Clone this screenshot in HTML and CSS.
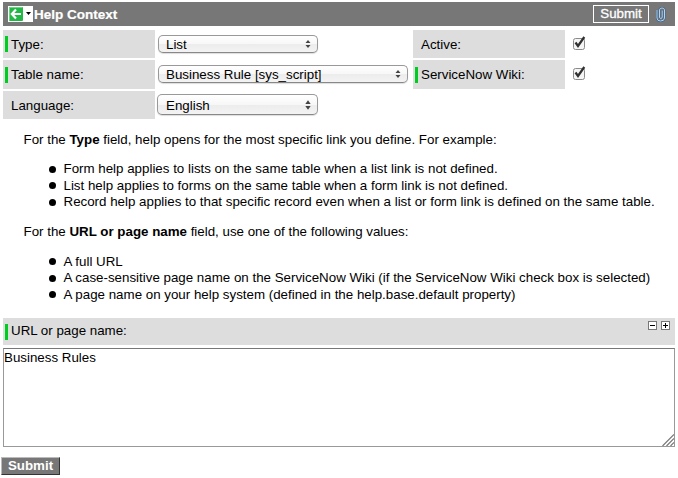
FILE: index.html
```html
<!DOCTYPE html>
<html lang="en">
<head>
<meta charset="utf-8">
<title>Help Context</title>
<link rel="stylesheet" href="styles.css">
</head>
<body>
<header class="titlebar">
  <div class="back">
    <svg width="25" height="16" viewBox="0 0 25 16">
      <rect width="25" height="16" fill="#fff"/>
      <rect x="1" y="1" width="14" height="14" rx="1" fill="#22b845"/>
      <path d="M1.500 14.500V1.500H14" fill="none" stroke="#68d981"/>
      <path d="M8 3.500L3.800 8L8 12.500M4 8H13" fill="none" stroke="#fff" stroke-width="2.200"/>
      <path d="M18 6H23L20.500 9Z" fill="#000"/>
    </svg>
  </div>
  <h1>Help Context</h1>
  <button class="top-submit">Submit</button>
  <svg class="clip" width="10" height="15" viewBox="0 0 10 15">
    <path d="M1 3V11Q1 14 4.500 14Q8.500 14 8.500 11V3Q8.500 1 6 1Q3.500 1 3.500 3V10Q3.500 11.500 4.800 11.500Q6.200 11.500 6.200 10V3.500" fill="none" stroke="#3d6088" stroke-width="1.900"/>
    <path d="M1 3V11Q1 14 4.500 14Q8.500 14 8.500 11V3Q8.500 1 6 1Q3.500 1 3.500 3V10Q3.500 11.500 4.800 11.500Q6.200 11.500 6.200 10V3.500" fill="none" stroke="#b4d5ee" stroke-width="1"/>
  </svg>
</header>
<main>
  <div class="fields">
    <div class="label required type-label">Type:</div>
    <div class="value"><div class="select short"><span>List</span><svg class="arrows" width="6" height="8" viewBox="0 0 6 8"><path d="M.5 3L3 0L5.500 3ZM.5 5L3 8L5.500 5Z" fill="#444"/></svg></div></div>
    <div class="label type-label">Active:</div>
    <div class="check"><svg width="16" height="17" viewBox="0 0 16 17"><rect x="1.500" y="4.500" width="11" height="11" rx="2" fill="#f5f5f5" stroke="#8a8a8a"/><path d="M3.500 8.500L6 12L12.300 3" fill="none" stroke="#303030" stroke-width="2.200"/></svg></div>

    <div class="label required">Table name:</div>
    <div class="value"><div class="select long"><span>Business Rule [sys_script]</span><svg class="arrows" width="6" height="8" viewBox="0 0 6 8"><path d="M.5 3L3 0L5.500 3ZM.5 5L3 8L5.500 5Z" fill="#444"/></svg></div></div>
    <div class="label required">ServiceNow Wiki:</div>
    <div class="check"><svg width="16" height="17" viewBox="0 0 16 17"><rect x="1.500" y="4.500" width="11" height="11" rx="2" fill="#f5f5f5" stroke="#8a8a8a"/><path d="M3.500 8.500L6 12L12.300 3" fill="none" stroke="#303030" stroke-width="2.200"/></svg></div>

    <div class="label type-label">Language:</div>
    <div class="value"><div class="select tall"><span>English</span><svg class="arrows" width="6" height="10" viewBox="0 0 6 10"><path d="M.3 4L3 .2L5.700 4ZM.3 6L3 9.800L5.700 6Z" fill="#444"/></svg></div></div>
  </div>

  <section class="help">
    <p>For the <b>Type</b> field, help opens for the most specific link you define. For example:</p>
    <ul>
      <li>Form help applies to lists on the same table when a list link is not defined.</li>
      <li>List help applies to forms on the same table when a form link is not defined.</li>
      <li>Record help applies to that specific record even when a list or form link is defined on the same table.</li>
    </ul>
    <p>For the <b>URL or page name</b> field, use one of the following values:</p>
    <ul class="url-values">
      <li>A full URL</li>
      <li>A case-sensitive page name on the ServiceNow Wiki (if the ServiceNow Wiki check box is selected)</li>
      <li>A page name on your help system (defined in the help.base.default property)</li>
    </ul>
  </section>

  <div class="label required url-label">
    <span>URL or page name:</span>
    <svg width="22" height="9" viewBox="0 0 22 9" shape-rendering="crispEdges">
      <path d="M.5 .5H8.500V8.500H.5ZM13.500 .5H21.500V8.500H13.500Z" fill="#fff" stroke="#777"/>
      <path d="M2 4.500H7M15 4.500H20M17.500 2V7" fill="none" stroke="#000"/>
    </svg>
  </div>
  <div class="text-area">
    <span>Business Rules</span>
    <svg class="grip" width="12" height="12" viewBox="0 0 12 12"><path d="M.5 12L12 .5M4.500 12L12 4.500M8.500 12L12 8.500" stroke="#777" stroke-width="1.200" fill="none"/></svg>
  </div>
  <button class="bottom-submit">Submit</button>
</main>
</body>
</html>
```
FILE: styles.css
```css
* { box-sizing: border-box; }
body {
  margin: 0;
  padding: 2px 3px 0;
  background: #fff;
  color: #000;
  font: 13.333px/16px "Liberation Sans", Arial, sans-serif;
}
svg { display: block; flex: none; }
.titlebar {
  display: flex;
  align-items: center;
  height: 24px;
  padding: 0 9px 0 5px;
  background: #777;
  color: #fff;
}
h1 { margin: 0 auto 0 1px; padding-top: 1px; font-size: 13.5px; line-height: 16px; white-space: nowrap; -webkit-text-stroke: .2px #fff; }
button { font-family: inherit; padding: 0; display: block; }
.top-submit {
  width: 56px;
  height: 18px;
  border: 1px solid #fff;
  background: #777;
  color: #fff;
  font-size: 13.333px;
  line-height: 16px;
  -webkit-text-stroke: .3px #fff;
}
.clip { margin-left: 7px; }
.fields {
  display: grid;
  grid-template-columns: 152px 258px 152px 1fr;
  grid-template-rows: 28px 29px 28px;
  row-gap: 2px;
  margin-top: 4px;
}
.label {
  display: flex;
  align-items: center;
  padding-left: 8px;
  background: #ddd;
  white-space: nowrap;
}
.type-label { padding-top: 2px; }
.required {
  background: linear-gradient(#00cc22, #00cc22) 2px center / 3px 16px no-repeat #ddd;
}
.value { display: flex; align-items: flex-start; padding: 5px 0 0 3px; }
.select {
  display: flex;
  align-items: center;
  justify-content: space-between;
  width: 160px;
  height: 18px;
  padding: 0 6px 0 7px;
  border: 1px solid #999;
  border-bottom-color: #888;
  border-radius: 5px;
  background: linear-gradient(#fff, #f7f7f7 50%, #ececec 51%, #f3f3f3);
  box-shadow: 0 1px 1px #ddd;
  white-space: nowrap;
}
.select span { padding-top: 2px; }
.long { width: 250px; }
.tall { width: 161px; height: 21px; margin: -2px 0 0 -1px; padding-left: 8px; }
.check { padding: 4px 0 0 7px; }
.help { padding: 12px 0 0 20.5px; white-space: nowrap; height: 199px; }
.help p { margin: 0; line-height: 17px; }
.help ul { margin: 13px 0 12px; padding-left: 25px; line-height: 16.5px; list-style: none; }
.help .url-values { margin-top: 14px; }
.help li { display: flex; align-items: center; }
.help li::before {
  content: "";
  width: 7px;
  height: 7px;
  margin-right: 8px;
  border-radius: 50%;
  background: #000;
}
.url-label {
  height: 27px;
  padding-right: 5px;
  padding-bottom: 2px;
  justify-content: space-between;
}
.url-label svg { margin-top: -10px; }
.text-area {
  position: relative;
  height: 99px;
  margin-top: 3px;
  padding: 1px 0;
  border: 1px solid #999;
  border-top-color: #777;
}
.grip { position: absolute; right: 0; bottom: 0; }
.bottom-submit {
  width: 59px;
  height: 18px;
  margin: 10px 0 0 -2px;
  border: 1px solid;
  border-color: #bbb #333 #333 #bbb;
  background: #777;
  color: #fff;
  font-size: 13.333px;
  font-weight: bold;
  line-height: 16px;
}
```
